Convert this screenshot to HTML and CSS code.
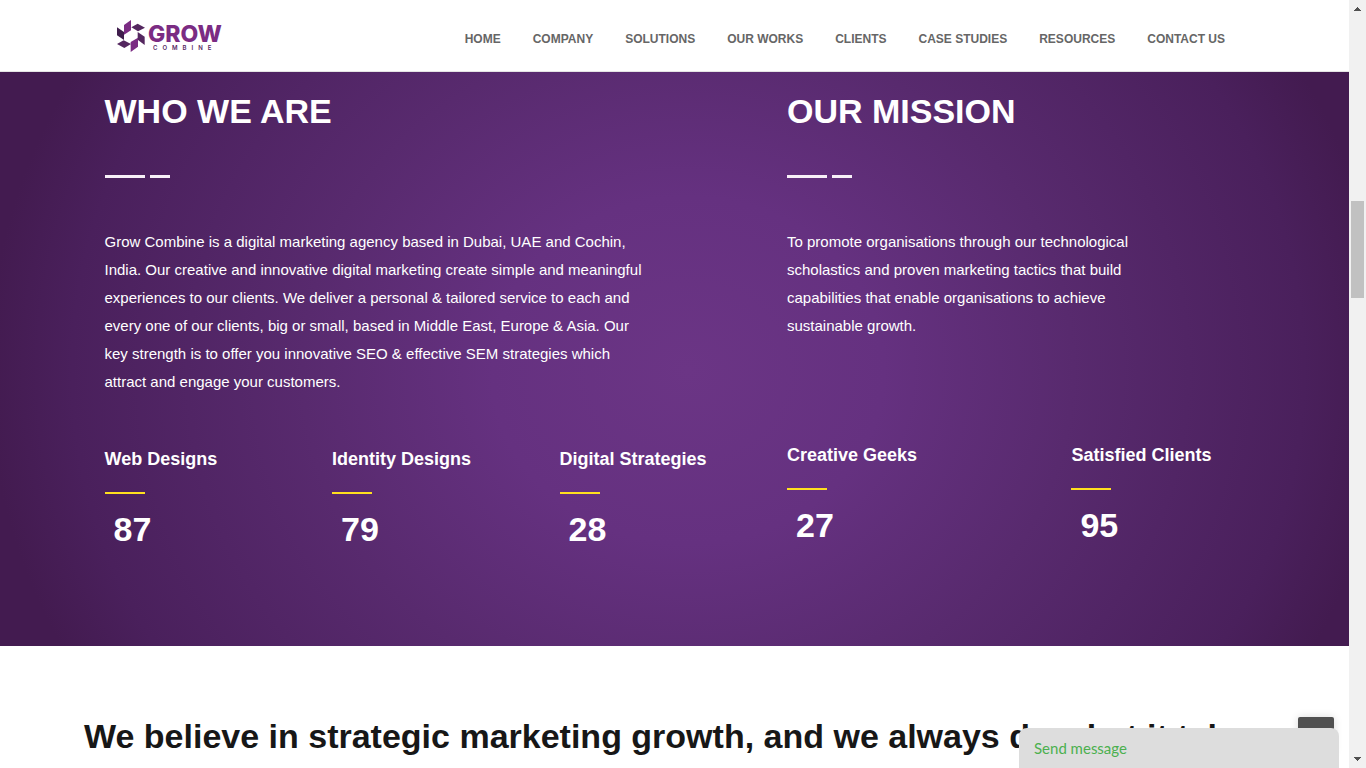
FILE: index.html
```html
<!DOCTYPE html>
<html lang="en">
<head>
<meta charset="utf-8">
<meta name="viewport" content="width=device-width, initial-scale=1">
<title>Grow Combine</title>
<link rel="stylesheet" href="styles.css">
</head>
<body>
<div class="page">
  <header class="header">
    <a class="logo" href="#" aria-label="Grow Combine">
      <svg class="logo-mark" viewBox="0 0 84 96" aria-hidden="true">
        <path fill="#7b2c83" d="M21 15 42 0v31L21 44z"/>
        <path fill="#54275f" d="M43 22 62 11l22 12-21 11z"/>
        <path fill="#54275f" d="M62 36l21 14v25L62 59z"/>
        <path fill="#7b2c83" d="M41 66l22-13v27L41 96z"/>
        <path fill="#54275f" d="M0 72l20-11 22 11-20 12z"/>
        <path fill="#3f1d4c" d="M0 22l21 14v24L0 46z"/>
      </svg>
      <span class="logo-text">
        <span class="logo-name">GROW</span>
        <span class="logo-sub">COMBINE</span>
      </span>
    </a>
    <nav class="nav">
      <a href="#">HOME</a>
      <a href="#">COMPANY</a>
      <a href="#">SOLUTIONS</a>
      <a href="#">OUR WORKS</a>
      <a href="#">CLIENTS</a>
      <a href="#">CASE STUDIES</a>
      <a href="#">RESOURCES</a>
      <a href="#">CONTACT US</a>
    </nav>
  </header>

  <main>
    <section class="about">
      <div class="about-row">
        <div class="about-who">
          <h2 class="about-title">WHO WE ARE</h2>
          <div class="dashes"><span class="dash-long"></span><span class="dash-short"></span></div>
          <p class="about-text who-text">Grow Combine is a digital marketing agency based in Dubai, UAE and Cochin, India. Our creative and innovative digital marketing create simple and meaningful experiences to our clients. We deliver a personal &amp; tailored service to each and every one of our clients, big or small, based in Middle East, Europe &amp; Asia. Our key strength is to offer you innovative SEO &amp; effective SEM strategies which attract and engage your customers.</p>
          <div class="stats stats-three">
            <div class="stat"><h3>Web Designs</h3><p>87</p></div>
            <div class="stat"><h3>Identity Designs</h3><p>79</p></div>
            <div class="stat"><h3>Digital Strategies</h3><p>28</p></div>
          </div>
        </div>
        <div class="about-mission">
          <h2 class="about-title">OUR MISSION</h2>
          <div class="dashes"><span class="dash-long"></span><span class="dash-short"></span></div>
          <p class="about-text mission-text">To promote organisations through our technological scholastics and proven marketing tactics that build capabilities that enable organisations to achieve sustainable growth.</p>
          <div class="stats stats-two">
            <div class="stat"><h3>Creative Geeks</h3><p>27</p></div>
            <div class="stat"><h3>Satisfied Clients</h3><p>95</p></div>
          </div>
        </div>
      </div>
    </section>
    <section class="belief">
      <h2>We believe in strategic marketing growth, and we always do what it takes</h2>
    </section>
  </main>

  <button class="to-top" type="button" aria-label="Back to top"></button>
  <button class="chat" type="button">Send message</button>
</div>
<div class="scrollbar" aria-hidden="true">
  <svg class="arrow" viewBox="0 0 17 17"><path fill="#505050" d="M8 7h1v1h1v1h1v1h1v1H5v-1h1V9h1V8h1z"/></svg>
  <div class="track"><div class="thumb"></div></div>
  <svg class="arrow" viewBox="0 0 17 17"><path fill="#505050" d="M5 6h7v1h-1v1h-1v1H9v1H8V9H7V8H6V7H5z"/></svg>
</div>
</body>
</html>
```
FILE: styles.css
```css
* { box-sizing: border-box; }

body {
  margin: 0;
  height: 100vh;
  overflow: hidden;
  display: flex;
  background: #fff;
  font-family: "Liberation Sans", Arial, sans-serif;
}

h2, h3, p { margin: 0; }

.page {
  flex: 1;
  min-width: 0;
  position: relative;
  overflow: hidden;
}

/* Header */
.header {
  display: flex;
  align-items: center;
  justify-content: space-between;
  height: 72px;
  padding: 0 124px 0 117px;
  border-bottom: 1px solid #e4e4e4;
}

.logo {
  display: flex;
  align-items: center;
  gap: 3px;
  text-decoration: none;
}

.logo-mark { width: 28px; height: 32px; }

.logo-text {
  display: flex;
  flex-direction: column;
  padding-top: 4px;
}

.logo-name {
  font: 800 23px/20px Inter, sans-serif;
  color: #7b2c83;
}

.logo-sub {
  padding-left: 5px;
  font: 600 6px/8px Inter, sans-serif;
  letter-spacing: 5px;
  color: #54275f;
}

.nav {
  display: flex;
  gap: 32px;
  padding-top: 7px;
}

.nav a {
  font-size: 12px;
  font-weight: 700;
  line-height: 18px;
  color: #666;
  text-decoration: none;
  white-space: nowrap;
}

/* About */
.about {
  padding: 16px 0 97px;
  color: #fff;
  background: radial-gradient(ellipse 700px 620px at 51% 52%, #6b3585 0%, #653180 28%, #582a6e 55%, #4a205c 88%, #431b50 100%);
}

.about-row {
  display: grid;
  grid-template-columns: 7fr 5fr;
  max-width: 1170px;
  margin: 0 auto;
}

.about-who, .about-mission {
  display: flex;
  flex-direction: column;
  padding-left: 15px;
}

.about-title {
  font-size: 34px;
  line-height: 46px;
}

.dashes {
  display: flex;
  gap: 5px;
  margin: 41px 0 50px;
}

.dash-long, .dash-short { height: 3px; background: #f8f0f8; }
.dash-long { width: 40px; }
.dash-short { width: 20px; }

.about-text {
  font-size: 15px;
  line-height: 28px;
}

.who-text { max-width: 540px; }
.mission-text { max-width: 375px; }

.stats {
  display: grid;
  width: calc(100% + 15px);
}

.stats-three { grid-template-columns: repeat(3, 1fr); margin-top: 50px; }
.stats-two { grid-template-columns: 7fr 5fr; margin-top: 102px; }

.stat h3 {
  font-size: 18px;
  line-height: 26px;
  white-space: nowrap;
}

.stat h3::after {
  content: "";
  display: block;
  width: 40px;
  height: 2px;
  margin-top: 20px;
  background: #ffe01f;
}

.stat p {
  padding: 15px 0 0 9px;
  font-size: 34px;
  font-weight: 700;
  line-height: 40px;
}

/* Belief */
.belief {
  padding: 65px 0 40px 84px;
  color: #171717;
}

.belief h2 {
  font-size: 34px;
  line-height: 50px;
  white-space: nowrap;
}

/* Floating controls */
.to-top {
  position: absolute;
  right: 15px;
  bottom: 15px;
  width: 36px;
  height: 36px;
  border: 0;
  border-radius: 2px;
  background: #505050;
  box-shadow: 0 0 8px rgba(0, 0, 0, .15);
}

.chat {
  position: absolute;
  right: 10px;
  bottom: 0;
  width: 320px;
  height: 40px;
  padding: 0 15px;
  border: 0;
  border-radius: 8px 8px 0 0;
  background: #ddd;
  color: #4bb04f;
  font: 400 15px/40px Lato, sans-serif;
  text-align: left;
}

/* Scrollbar */
.scrollbar {
  display: flex;
  flex-direction: column;
  width: 17px;
  background: #f1f1f1;
}

.arrow { width: 17px; height: 17px; }
.track { flex: 1; padding: 184px 2px 0; }
.thumb { height: 97px; background: #c1c1c1; }
```
